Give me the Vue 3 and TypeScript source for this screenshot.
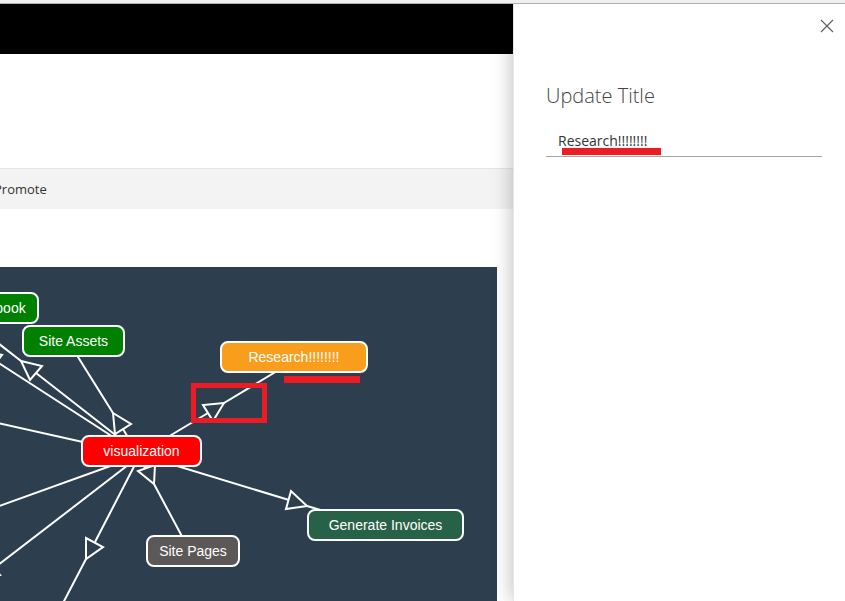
<script setup lang="ts">
import { ref } from 'vue'

interface GraphNode {
  id: string
  label: string
  x: number
  y: number
  width: number
  color: string
}

const title = ref('Research!!!!!!!!')

const nodes: GraphNode[] = [
  { id: 'book', label: 'book', x: -17, y: 26, width: 55, color: '#008000' },
  { id: 'assets', label: 'Site Assets', x: 23, y: 59, width: 101, color: '#008000' },
  { id: 'research', label: 'Research!!!!!!!!', x: 221, y: 75, width: 146, color: '#f99d1c' },
  { id: 'root', label: 'visualization', x: 82, y: 169, width: 119, color: '#ff0000' },
  { id: 'invoices', label: 'Generate Invoices', x: 308, y: 243, width: 155, color: '#276147' },
  { id: 'pages', label: 'Site Pages', x: 147, y: 269, width: 92, color: '#5d5858' },
]

const edges: string[] = [
  'M68 74 L113 146 M123 162 L136 184',
  'M-20 62 L21 94 M36 106 L141 188',
  'M-20 84 L141 188',
  'M-20 152 L141 188',
  'M297 92 L224 136 M208 146 L141 186',
  'M141 188 L289 233 M307 239 L385 262',
  'M193 290 L154 217 M145 202 L141 184',
  'M141 186 L95 275 M86 292 L50 361',
  'M141 188 L-20 246',
  'M141 188 L-20 312',
]

const arrows: string[] = [
  '113,146 131,157 115,167',
  '21,94 42,99 30,113',
  '224,136 203,138 213,154',
  '307,239 291,224 286,242',
  '154,217 155,198 138,204',
  '86,292 86,271 103,280',
  '-18,84 2,88 -9,102',
  '-14,292 0,308 -16,311',
]
</script>

<template>
  <div class="page">
    <div class="strip"></div>
    <div class="layout">
      <main class="content">
        <header class="suite"></header>
        <div class="site-head"></div>
        <nav class="nav"><a href="#">Promote</a></nav>
        <section class="graph">
          <svg class="canvas" role="img" aria-label="visualization">
            <path v-for="(d, i) in edges" :key="'e' + i" :d="d" class="edge" />
            <polygon v-for="(p, i) in arrows" :key="'a' + i" :points="p" class="arrow" />
            <g v-for="n in nodes" :key="n.id">
              <rect :x="n.x" :y="n.y" :width="n.width" height="30" rx="7" :fill="n.color" class="box" />
              <text :x="n.x + n.width / 2" :y="n.y + 20" class="label">{{ n.label }}</text>
            </g>
            <rect x="193.5" y="118.5" width="71" height="35" class="frame" />
            <rect x="284" y="109" width="76" height="7" class="bar" />
          </svg>
        </section>
      </main>
      <aside class="panel">
        <button class="close" type="button" aria-label="Close">
          <svg width="14" height="14" viewBox="0 0 14 14">
            <path d="M1 1 L13 13 M13 1 L1 13" fill="none" stroke="#5c5c5c" stroke-width="1.1" />
          </svg>
        </button>
        <label class="heading" for="title">Update Title</label>
        <div class="field">
          <input id="title" v-model="title" type="text" />
          <span class="mark"></span>
        </div>
      </aside>
    </div>
  </div>
</template>

<style>
body {
  background: #fff;
}
</style>

<style scoped>
.page {
  display: flex;
  flex-direction: column;
  height: 100vh;
  overflow: hidden;
  font-family: "Open Sans", "Noto Sans", sans-serif;
}
.strip {
  flex: none;
  height: 3px;
  background: #f0f0f0;
  border-bottom: 1px solid #b0b0b0;
}
.layout {
  display: flex;
  flex: 1;
  min-height: 0;
}
.content {
  display: flex;
  flex-direction: column;
  flex: 1;
  min-width: 0;
}
.suite {
  flex: none;
  height: 50px;
  background: #000;
}
.site-head {
  flex: none;
  height: 114px;
}
.nav {
  display: flex;
  align-items: center;
  flex: none;
  height: 40px;
  background: #f3f3f3;
  border-top: 1px solid #e6e6e6;
  overflow: hidden;
}
.nav a {
  margin-left: -6px;
  color: #333;
  font-size: 13px;
  text-decoration: none;
}
.graph {
  flex: 1;
  min-height: 0;
  margin: 58px 16px 0 0;
  background: #2d3e4f;
  overflow: hidden;
}
.canvas {
  display: block;
  width: 100%;
  height: 100%;
}
.edge,
.arrow {
  fill: none;
  stroke: #fff;
  stroke-width: 2;
}
.arrow {
  fill: #2d3e4f;
}
.box {
  stroke: #fff;
  stroke-width: 2;
}
.label {
  fill: #fff;
  font-family: "Liberation Sans", Arial, sans-serif;
  font-size: 14px;
  text-anchor: middle;
}
.frame {
  fill: none;
  stroke: #ed1c24;
  stroke-width: 5;
}
.bar {
  fill: #ed1c24;
}
.panel {
  display: flex;
  flex-direction: column;
  position: relative;
  box-sizing: border-box;
  flex: none;
  width: 332px;
  padding: 15px 23px 0 32px;
  background: #fff;
  border-left: 1px solid #e6e6e6;
  box-shadow: 0 0 20px rgba(0, 0, 0, 0.28);
  clip-path: inset(0 0 0 -40px);
}
.close {
  display: flex;
  align-self: flex-end;
  margin-right: -12px;
  padding: 0;
  border: 0;
  background: none;
}
.heading {
  margin-top: 48px;
  color: #444;
  font-size: 20px;
  font-weight: 300;
  line-height: 30px;
}
.field {
  display: flex;
  position: relative;
  margin-top: 14px;
}
.field input {
  box-sizing: border-box;
  flex: 1;
  min-width: 0;
  height: 32px;
  padding: 0 12px;
  border: 0;
  border-bottom: 1px solid #a6a6a6;
  outline: 0;
  background: none;
  color: #333;
  font: 14px "Open Sans", "Noto Sans", sans-serif;
}
.mark {
  position: absolute;
  left: 16px;
  bottom: 2px;
  width: 99px;
  height: 7px;
  background: #ed1c24;
}
</style>
